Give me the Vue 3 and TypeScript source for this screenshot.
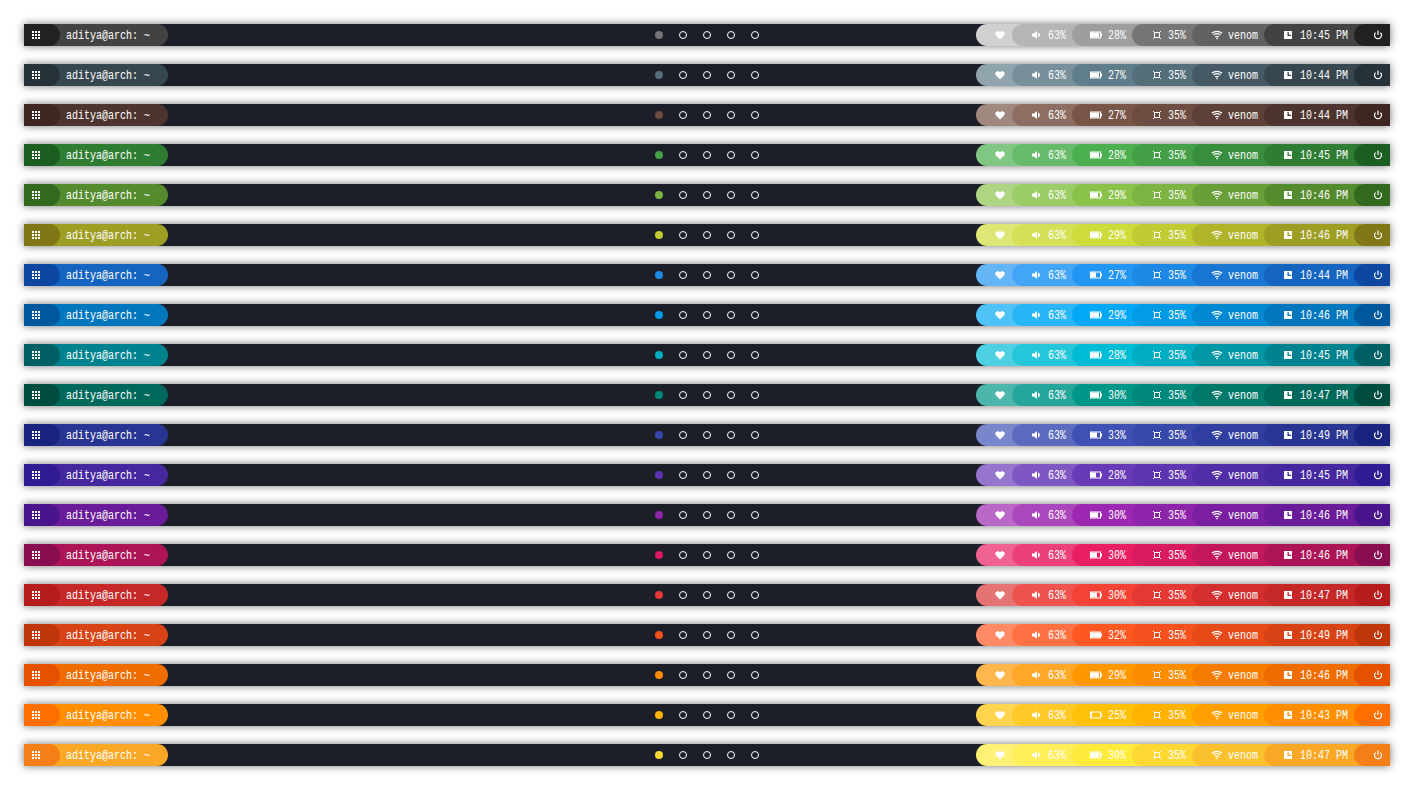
<template>
  <div class="page">
    <div v-for="row in rows" :key="row.name" class="bar">
      <div class="side">
        <div class="seg seg--launcher" :style="{ background: row.shades[6] }">
          <svg class="icon" viewBox="0 0 12 12" fill="#fff">
            <template v-for="y in [2, 5, 8]" :key="y">
              <rect v-for="x in [2, 5, 8]" :key="x" :x="x" :y="y" width="2" height="2" />
            </template>
          </svg>
        </div>
        <div class="seg seg--user" :style="{ background: row.shades[5] }">
          <span class="txt" :style="txtWidth('aditya@arch: ~')">aditya@arch: ~</span>
        </div>
      </div>

      <div class="workspaces">
        <span class="ws"><i class="dot dot--active" :style="{ background: row.shades[3] }"></i></span>
        <span v-for="n in 4" :key="n" class="ws"><i class="dot"></i></span>
      </div>

      <div class="modules">
        <div class="mod" :style="{ background: row.shades[0] }">
          <svg class="icon" viewBox="0 0 12 12" fill="#fff">
            <path d="M6 10.4 2 6.4C.7 5 1.1 2.7 3.3 2.2 4.6 2 5.5 2.7 6 3.5 6.5 2.7 7.4 2 8.7 2.2 10.9 2.7 11.3 5 10 6.4Z" />
          </svg>
        </div>
        <div class="mod" :style="{ background: row.shades[1] }">
          <svg class="icon" viewBox="0 0 12 12" fill="#fff">
            <path d="M2 4.5H4L7 2V10L4 7.5H2Z" />
            <path d="M8 3.6C9.3 4.1 9.9 5 9.9 6S9.3 7.9 8 8.4Z" />
          </svg>
          <span class="txt" :style="txtWidth('63%')">63%</span>
        </div>
        <div class="mod" :style="{ background: row.shades[2] }">
          <svg class="icon" viewBox="0 0 12 12">
            <rect x=".5" y="3" width="10" height="6" fill="none" stroke="#fff" />
            <rect x="11" y="4.5" width="1" height="3" fill="#fff" />
            <rect x="1" y="3.5" :width="row.fill" height="5" fill="#fff" />
          </svg>
          <span class="txt" :style="txtWidth('00%')">{{ row.battery }}%</span>
        </div>
        <div class="mod" :style="{ background: row.shades[3] }">
          <svg class="icon" viewBox="-1 0 12 12" fill="none" stroke="#fff">
            <rect x="3.5" y="3.5" width="5" height="5" />
            <path d="M2 2 3.5 3.5M10 2 8.5 3.5M2 10 3.5 8.5M10 10 8.5 8.5" />
          </svg>
          <span class="txt" :style="txtWidth('35%')">35%</span>
        </div>
        <div class="mod" :style="{ background: row.shades[4] }">
          <svg class="icon" viewBox="-1 0 12 12" fill="none" stroke="#fff" stroke-width="1.2">
            <path d="M.8 4.2C3.8 1.7 8.2 1.7 11.2 4.2" />
            <path d="M2.6 6C4.7 4.4 7.3 4.4 9.4 6" />
            <path d="M4.3 7.9C5.4 7.1 6.6 7.1 7.7 7.9" />
            <circle cx="6" cy="9.6" r=".8" fill="#fff" stroke="none" />
          </svg>
          <span class="txt" :style="txtWidth('venom')">venom</span>
        </div>
        <div class="mod" :style="{ background: row.shades[5] }">
          <svg class="icon" viewBox="0 0 12 12" fill="#fff">
            <path fill-rule="evenodd" d="M2 2H10V10H2ZM5.5 3V7H9V5.7H6.8V3Z" />
          </svg>
          <span class="txt" :style="txtWidth(row.time)">{{ row.time }}</span>
        </div>
        <div class="mod mod--last" :style="{ background: row.shades[6] }">
          <svg class="icon" viewBox="0 0 12 12" fill="none" stroke="#fff" stroke-width="1.2">
            <path d="M6 1.6V6" />
            <path d="M3.6 3.6A3.5 3.5 0 1 0 8.4 3.6" />
          </svg>
        </div>
      </div>
    </div>
  </div>
</template>

<script setup lang="ts">
interface Row {
  name: string
  shades: string[] // 300 to 900
  battery: number
  fill: number // px of the battery icon that is filled
  time: string
}

const rows: Row[] = [
  { name: 'grey', shades: ['#d0d0d0', '#b5b5b5', '#9e9e9e', '#757575', '#616161', '#424242', '#212121'], battery: 28, fill: 8, time: '10:45 PM' },
  { name: 'blue-grey', shades: ['#90a4ae', '#78909c', '#607d8b', '#546e7a', '#455a64', '#37474f', '#263238'], battery: 27, fill: 8, time: '10:44 PM' },
  { name: 'brown', shades: ['#a1887f', '#8d6e63', '#795548', '#6d4c41', '#5d4037', '#4e342e', '#3e2723'], battery: 27, fill: 8, time: '10:44 PM' },
  { name: 'green', shades: ['#81c784', '#66bb6a', '#4caf50', '#43a047', '#388e3c', '#2e7d32', '#1b5e20'], battery: 28, fill: 8, time: '10:45 PM' },
  { name: 'light-green', shades: ['#aed581', '#9ccc65', '#8bc34a', '#7cb342', '#689f38', '#558b2f', '#33691e'], battery: 29, fill: 7, time: '10:46 PM' },
  { name: 'lime', shades: ['#dce775', '#d4e157', '#cddc39', '#c0ca33', '#afb42b', '#9e9d24', '#827717'], battery: 29, fill: 8, time: '10:46 PM' },
  { name: 'blue', shades: ['#64b5f6', '#42a5f5', '#2196f3', '#1e88e5', '#1976d2', '#1565c0', '#0d47a1'], battery: 27, fill: 5, time: '10:44 PM' },
  { name: 'light-blue', shades: ['#4fc3f7', '#29b6f6', '#03a9f4', '#039be5', '#0288d1', '#0277bd', '#01579b'], battery: 29, fill: 8, time: '10:46 PM' },
  { name: 'cyan', shades: ['#4dd0e1', '#26c6da', '#00bcd4', '#00acc1', '#0097a7', '#00838f', '#006064'], battery: 28, fill: 8, time: '10:45 PM' },
  { name: 'teal', shades: ['#4db6ac', '#26a69a', '#009688', '#00897b', '#00796b', '#00695c', '#004d40'], battery: 30, fill: 8, time: '10:47 PM' },
  { name: 'indigo', shades: ['#7986cb', '#5c6bc0', '#3f51b5', '#3949ab', '#303f9f', '#283593', '#1a237e'], battery: 33, fill: 6, time: '10:49 PM' },
  { name: 'deep-purple', shades: ['#9575cd', '#7e57c2', '#673ab7', '#5e35b1', '#512da8', '#4527a0', '#311b92'], battery: 28, fill: 5, time: '10:45 PM' },
  { name: 'purple', shades: ['#ba68c8', '#ab47bc', '#9c27b0', '#8e24aa', '#7b1fa2', '#6a1b9a', '#4a148c'], battery: 30, fill: 7, time: '10:46 PM' },
  { name: 'pink', shades: ['#f06292', '#ec407a', '#e91e63', '#d81b60', '#c2185b', '#ad1457', '#880e4f'], battery: 30, fill: 6, time: '10:46 PM' },
  { name: 'red', shades: ['#e57373', '#ef5350', '#f44336', '#e53935', '#d32f2f', '#c62828', '#b71c1c'], battery: 30, fill: 6, time: '10:47 PM' },
  { name: 'deep-orange', shades: ['#ff8a65', '#ff7043', '#ff5722', '#f4511e', '#e64a19', '#d84315', '#bf360c'], battery: 32, fill: 9, time: '10:49 PM' },
  { name: 'orange', shades: ['#ffb74d', '#ffa726', '#ff9800', '#fb8c00', '#f57c00', '#ef6c00', '#e65100'], battery: 29, fill: 8, time: '10:46 PM' },
  { name: 'amber', shades: ['#ffd54f', '#ffca28', '#ffc107', '#ffb300', '#ffa000', '#ff8f00', '#ff6f00'], battery: 25, fill: 1, time: '10:43 PM' },
  { name: 'yellow', shades: ['#fff176', '#ffee58', '#ffeb3b', '#fdd835', '#fbc02d', '#f9a825', '#f57f17'], battery: 30, fill: 8, time: '10:47 PM' }
]

// the terminal font is 6px per character
const txtWidth = (text: string) => ({ width: `${text.length * 6}px` })
</script>

<style scoped>
.page {
  display: flex;
  flex-direction: column;
  gap: 18px;
  padding: 24px 28px 24px 24px;
}

.bar {
  display: grid;
  grid-template-columns: 1fr auto 1fr;
  grid-template-rows: 22px;
  align-items: stretch;
  height: 22px;
  background: #1c1f28;
  box-shadow: 0 0 8px rgba(0, 0, 0, 0.55);
  color: #fff;
  font-family: 'Liberation Mono', monospace;
  font-size: 12px;
  white-space: nowrap;
}

.txt {
  display: block;
  height: 22px;
  line-height: 24px;
  transform: scaleX(0.8333);
  transform-origin: left center;
}

.side,
.modules {
  display: flex;
}

.modules {
  justify-content: flex-end;
}

.icon {
  display: block;
  flex: none;
  width: 12px;
  height: 12px;
}

.seg {
  display: flex;
  align-items: center;
  border-radius: 0 11px 11px 0;
}

.seg--launcher {
  position: relative;
  z-index: 1;
  padding: 0 18px 0 6px;
}

.seg--user {
  margin-left: -12px;
  padding: 0 18px 0 18px;
}

.workspaces {
  display: flex;
  align-items: center;
}

.ws {
  display: flex;
  align-items: center;
  justify-content: center;
  width: 24px;
}

.dot {
  display: block;
  box-sizing: border-box;
  width: 8px;
  height: 8px;
  border: 1.25px solid #fff;
  border-radius: 50%;
}

.dot--active {
  border: 0;
}

.mod {
  display: flex;
  align-items: center;
  gap: 6px;
  margin-right: -12px;
  padding: 0 18px;
  border-radius: 11px 0 0 11px;
}

.mod--last {
  margin-right: 0;
  padding-right: 6px;
}
</style>

<style>
html,
body {
  background: #fff;
}
</style>
